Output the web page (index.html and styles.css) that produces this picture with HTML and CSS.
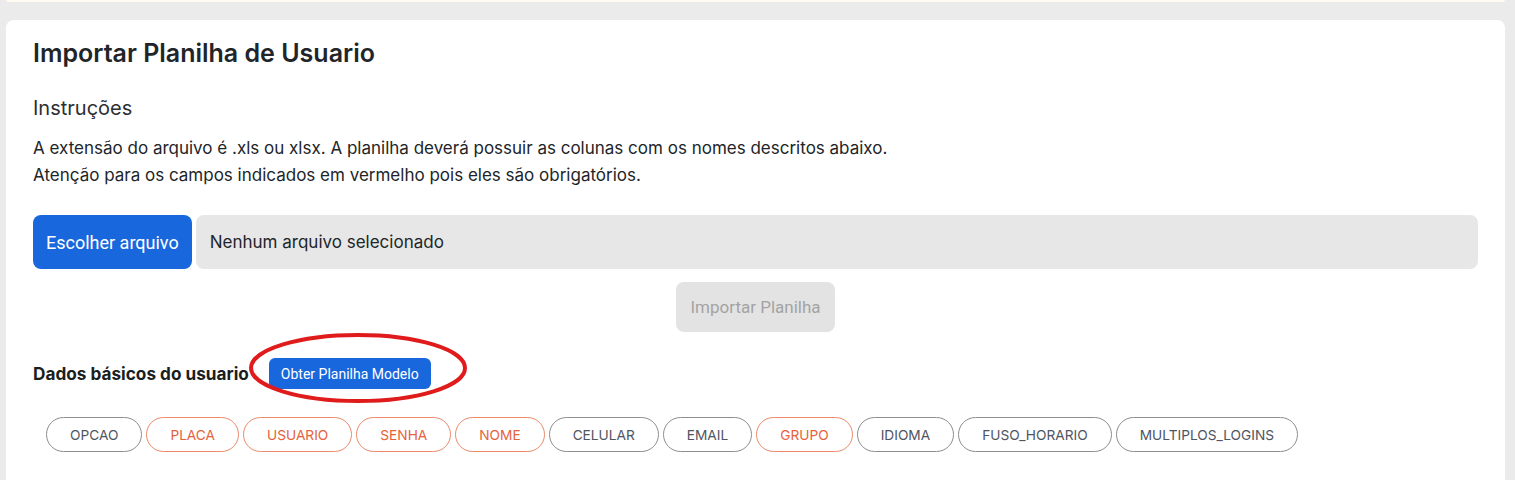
FILE: index.html
```html
<!DOCTYPE html>
<html lang="pt-BR">
<head>
<meta charset="utf-8">
<title>Importar Planilha de Usuario</title>
<link rel="stylesheet" href="styles.css">
</head>
<body>
<div class="topcard"></div>
<main class="card">
  <h1 class="title">Importar Planilha de Usuario</h1>
  <h2 class="subtitle">Instruções</h2>
  <p class="text">A extensão do arquivo é .xls ou xlsx. A planilha deverá possuir as colunas com os nomes descritos abaixo.<br>Atenção para os campos indicados em vermelho pois eles são obrigatórios.</p>
  <div class="file">
    <span class="file-btn">Escolher arquivo</span>
    <span class="file-name">Nenhum arquivo selecionado</span>
  </div>
  <div class="import-row">
    <button class="import-btn" disabled>Importar Planilha</button>
  </div>
  <div class="section-row">
    <strong class="section-label">Dados básicos do usuario</strong>
    <span class="model-wrap">
      <button class="model-btn">Obter Planilha Modelo</button>
      <svg class="ring" width="222" height="74" viewBox="0 0 222 74"><ellipse cx="111" cy="37" rx="107" ry="33" fill="none" stroke="#e01b1b" stroke-width="4"/></svg>
    </span>
  </div>
  <div class="chips">
    <span class="chip">OPCAO</span>
    <span class="chip req">PLACA</span>
    <span class="chip req">USUARIO</span>
    <span class="chip req">SENHA</span>
    <span class="chip req">NOME</span>
    <span class="chip">CELULAR</span>
    <span class="chip">EMAIL</span>
    <span class="chip req">GRUPO</span>
    <span class="chip">IDIOMA</span>
    <span class="chip">FUSO_HORARIO</span>
    <span class="chip">MULTIPLOS_LOGINS</span>
  </div>
</main>
</body>
</html>
```
FILE: styles.css
```css
* { box-sizing: border-box; }
html, body { margin: 0; padding: 0; }
body {
  background: #ebebeb;
  font-family: Inter, "Noto Sans", sans-serif;
  color: #212529;
  height: 480px;
  overflow: hidden;
}
.topcard {
  height: 2px;
  margin: 0 10px 0 6px;
  background: #fefaf0;
  border-radius: 0 0 6px 6px;
}
.card {
  margin: 18px 10px 0 6px;
  background: #fff;
  border-radius: 8px 8px 0 0;
  padding: 18px 27px 40px 27px;
}
.title {
  margin: 0;
  font-size: 25px;
  font-weight: 600;
  line-height: 30px;
  color: #212529;
}
.subtitle {
  margin: 27px 0 0 0;
  font-size: 20px;
  font-weight: 400;
  line-height: 26px;
  color: #2b2f33;
}
.text {
  margin: 14px 0 0 0;
  font-size: 17px;
  line-height: 27px;
}
.file {
  display: flex;
  gap: 4px;
  margin-top: 26px;
  height: 54px;
}
.file-btn {
  display: flex;
  align-items: center;
  padding: 0 13px;
  background: #1967dd;
  color: #fff;
  border-radius: 8px;
  font-family: Roboto, sans-serif;
  font-size: 18px;
}
.file-name {
  flex: 1;
  display: flex;
  align-items: center;
  padding: 0 14px;
  background: #e7e7e7;
  border-radius: 8px;
  font-size: 17px;
  color: #212529;
}
.import-row {
  display: flex;
  justify-content: center;
  margin-top: 13px;
}
.import-btn {
  height: 50px;
  padding: 0 14px;
  border: none;
  border-radius: 8px;
  background: #e3e3e3;
  color: #a3a3a3;
  font-family: Roboto, sans-serif;
  font-size: 17px;
}
.section-row {
  display: flex;
  align-items: center;
  gap: 20px;
  margin-top: 26px;
  height: 31px;
}
.section-label {
  font-size: 17.2px;
  font-weight: 700;
  color: #1b1e21;
}
.model-wrap {
  position: relative;
  display: inline-flex;
}
.model-btn {
  height: 31px;
  padding: 0 12px;
  border: none;
  border-radius: 6px;
  background: #1967dd;
  color: #fff;
  font-family: Roboto, sans-serif;
  font-size: 14px;
}
.ring {
  position: absolute;
  left: -22px;
  top: -27px;
  pointer-events: none;
}
.chips {
  display: flex;
  flex-wrap: wrap;
  gap: 4px;
  margin-top: 28px;
  padding-left: 13px;
}
.chip {
  display: inline-flex;
  align-items: center;
  height: 35px;
  padding: 0 23px;
  border: 1px solid #8e8e8e;
  border-radius: 18px;
  font-size: 13.7px;
  color: #4f5561;
}
.chip.req {
  border-color: #ec8a6a;
  color: #e5623b;
}
```
